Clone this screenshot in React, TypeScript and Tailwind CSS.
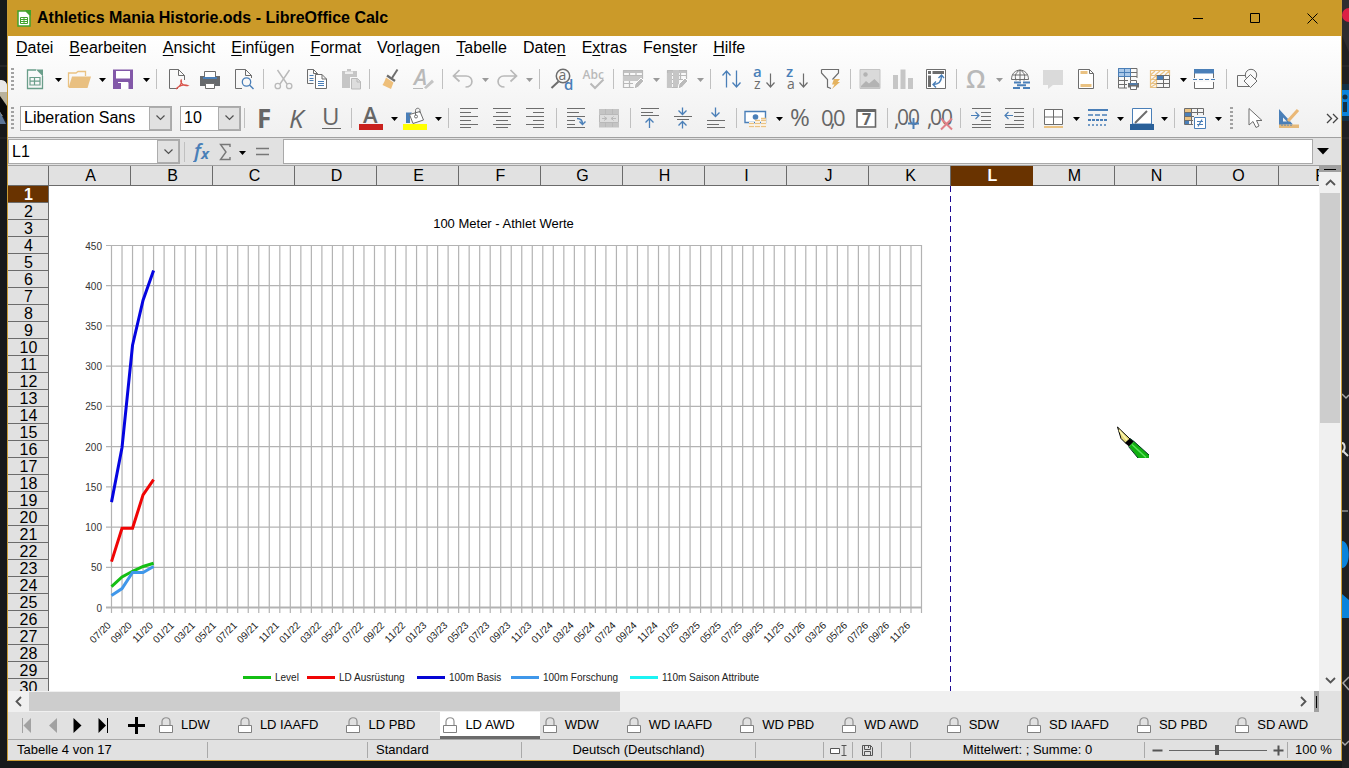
import { useState } from 'react';
import type { ReactNode } from 'react';
import clsx from 'clsx';

const GRAY = '#6d6d6d';
const LIGHT = '#b9b9b9';
const BLUE = '#4a7fb8';
const SAND = '#eac282';
const GLYPH = 'Open Sans, sans-serif';

function Icon({ children }: { children: ReactNode }) {
  return (
    <svg width="24" height="24" viewBox="0 0 24 24" fill="none" className="shrink-0 overflow-visible" aria-hidden="true">
      {children}
    </svg>
  );
}

const icons: Record<string, ReactNode> = {
  /* ---------- standard toolbar icons ---------- */
  new: (
    <>
      <path d="M13 3H4.5V21.5H19.5V9" stroke="#6a9e8a" strokeWidth="1.3" />
      <path d="M13 2.5H20V9.5Z" fill="#6a9e8a" />
      <path d="M7 10.5H17V18H7ZM7 14.2H17M11.5 10.5V18" stroke="#6a9e8a" strokeWidth="1.2" />
    </>
  ),
  open: (
    <>
      <path d="M1.5 20V6H9L11 4.5H18.5V9" stroke={SAND} strokeWidth="1.3" />
      <path d="M5 9.5H24L20.5 21H1.5Z" fill="#e9c081" />
    </>
  ),
  save: (
    <>
      <path d="M2 2.5H22V22H2Z" fill="#8258a8" />
      <path d="M5 4H19V11.5H5Z" fill="#fff" />
      <path d="M7 15.5H17V22H7Z" fill="#fff" />
      <path d="M10 16V22H7V16Z" fill="#8258a8" />
      <path d="M7 15.5H17V22" stroke="#fff" />
    </>
  ),
  pdf: (
    <>
      <path d="M13.5 2.5H4.5V21.5H13M19.5 13V8.5L13.5 2.5V8.5H19.5" stroke={GRAY} />
      <path d="M11 22C15 19.5 17.5 15.5 16.2 13C15 15 18 19.5 22.5 18.5C19 17 14 18.5 11 22" stroke="#d9534a" strokeWidth="1.3" />
    </>
  ),
  print: (
    <>
      <path d="M2 9H22V19H2Z" fill="#66696c" />
      <path d="M6.5 11.5V4.5H17.5V11.5Z" stroke={GRAY} fill="#fff" />
      <path d="M5 11H19" stroke={BLUE} strokeWidth="2" />
      <path d="M7.5 16.5H16.5V21.5H7.5Z" stroke={GRAY} fill="#fff" />
    </>
  ),
  preview: (
    <>
      <path d="M11 21.5H4.5V2.5H14.5L20.5 8.5V11M14.5 2.5V8.5H20.5" stroke={GRAY} />
      <circle cx="15.5" cy="15" r="4.2" stroke={BLUE} strokeWidth="1.3" />
      <path d="M18.5 18L22.5 22" stroke={BLUE} strokeWidth="1.5" />
    </>
  ),
  cut: (
    <>
      <path d="M6.5 3L16 17M18.5 3L9 17" stroke={LIGHT} strokeWidth="1.4" />
      <circle cx="6.8" cy="19" r="2.7" stroke={LIGHT} strokeWidth="1.3" />
      <circle cx="18.2" cy="19" r="2.7" stroke={LIGHT} strokeWidth="1.3" />
    </>
  ),
  copy: (
    <>
      <path d="M9.5 16.5H3.5V2.5H9.5L13.5 6.5V8" stroke={GRAY} />
      <path d="M9.5 2.5V6.5H13.5" stroke={GRAY} />
      <path d="M11.5 7.5H18L22.5 12V21.5H11.5ZM18 7.5V12H22.5" stroke={GRAY} fill="#fff" />
      <path d="M5.5 8.5H9.5M5.5 11.5H9.5M5.5 13.5H9.5M14 14.5H20M14 16.5H20M14 18.5H20" stroke={BLUE} />
    </>
  ),
  paste: (
    <>
      <path d="M5 4H10V2H14V4H20V10H13V21H5Z" fill="#c6c6c6" />
      <path d="M8 4.5H16V7H8Z" fill="#eee" />
      <path d="M14.5 11.5H20.5L23.5 14.5V22H14.5Z" fill="#ddd" stroke={LIGHT} />
      <path d="M20 11.5V15H23.5" stroke={LIGHT} />
    </>
  ),
  brush: (
    <>
      <path d="M20.5 2.5L15 11" stroke={GRAY} strokeWidth="2" />
      <path d="M10 8.5L18 14" stroke={GRAY} strokeWidth="2.2" />
      <path d="M9 10.5L16.5 15.5L14 22L5.5 18C7 16 8 13 9 10.5Z" fill="#eebf7a" />
    </>
  ),
  clear: (
    <>
      <text x="4" y="18" fontSize="22" fontFamily={GLYPH} fontStyle="italic" fontWeight="600" fill={LIGHT}>A</text>
      <path d="M3 21.5H13" stroke={LIGHT} />
      <path d="M14 20.5L22 12.5L24 15L16 22Z" fill="#c4c4c4" />
    </>
  ),
  undo: <path d="M9.5 3L3.5 9L9.5 14.5M3.5 9H16C24 9 24 20 15.5 20" stroke={LIGHT} strokeWidth="1.7" />,
  redo: <path d="M16.5 3L22.5 9L16.5 14.5M22.5 9H10C2 9 2 20 10.5 20" stroke={LIGHT} strokeWidth="1.7" />,
  find: (
    <>
      <circle cx="15" cy="9" r="6.7" stroke={GRAY} strokeWidth="1.5" />
      <path d="M10.5 14.5L3.5 21" stroke={GRAY} strokeWidth="2" />
      <text x="10.5" y="13" fontSize="14" fontFamily={GLYPH} fill={GRAY}>a</text>
      <text x="16" y="22.5" fontSize="15" fontFamily={GLYPH} fontWeight="600" fill={BLUE}>d</text>
    </>
  ),
  spell: (
    <>
      <text x="1.5" y="12" fontSize="12" fontFamily={GLYPH} fontWeight="600" fill={LIGHT}>Abc</text>
      <path d="M9.5 16.5L14 21L22.5 12.5" stroke={LIGHT} strokeWidth="2" />
    </>
  ),
  rows: (
    <>
      <path d="M2 3H22V6H2Z" fill="#c2c2c2" />
      <path d="M2.5 3.5H21.5V12M2.5 3.5V20.5H13M8.5 6V20.5M15 6V13M2.5 8.5H21.5M2.5 16.5H12" stroke={LIGHT} strokeWidth="1.2" />
      <path d="M2 9H21V14H2Z" fill="#c9c9c9" />
      <path d="M13 22L14 17L20 11L23 14L17 20.5Z" fill="#bbb" stroke="#fff" />
    </>
  ),
  columns: (
    <>
      <path d="M2 3H22V6H2Z" fill="#c2c2c2" />
      <path d="M2.5 3.5H21.5V12M2.5 3.5V20.5H13M15.5 6V13M2.5 8.5H21.5M2.5 12.5H19M2.5 16.5H12" stroke={LIGHT} strokeWidth="1.2" />
      <path d="M8 3H14V20H8ZM2 6H7V21H2Z" fill="#c6c6c6" />
      <path d="M13 22L14 17L20 11L23 14L17 20.5Z" fill="#bbb" stroke="#fff" />
    </>
  ),
  sort: <path d="M7.5 20.5V4.5M3.5 8.5L7.5 4L11.5 8.5M17.5 3.5V19.5M13.5 15.5L17.5 20L21.5 15.5" stroke={BLUE} strokeWidth="1.3" />,
  sortAsc: (
    <>
      <text x="1" y="10" fontSize="15" fontFamily={GLYPH} fontWeight="600" fill={BLUE}>a</text>
      <text x="2" y="22" fontSize="14" fontFamily={GLYPH} fill={GRAY}>z</text>
      <path d="M18.5 6.5V19.5M14.5 15.5L18.5 20L22.5 15.5" stroke={GRAY} strokeWidth="1.2" />
    </>
  ),
  sortDesc: (
    <>
      <text x="1" y="10" fontSize="15" fontFamily={GLYPH} fontWeight="600" fill={BLUE}>z</text>
      <text x="2" y="22" fontSize="14" fontFamily={GLYPH} fill={GRAY}>a</text>
      <path d="M18.5 6.5V19.5M14.5 15.5L18.5 20L22.5 15.5" stroke={GRAY} strokeWidth="1.2" />
    </>
  ),
  filter: (
    <>
      <path d="M3.5 2.5H20.5V6L14.5 12.5M3.5 2.5V6L9.5 12.5V20L13 21.5" stroke={GRAY} strokeWidth="1.2" />
      <path d="M16 12H22L19.5 15H22L14 22L16.5 17.5H14Z" fill="#e5b35f" />
    </>
  ),
  image: (
    <>
      <path d="M2 2.5H22V21.5H2Z" fill="#dadada" stroke="#c4c4c4" />
      <path d="M3 19L8 14L11 16.5L16.5 12L21.5 17V20.5H3Z" fill="#b3b3b3" />
      <circle cx="7.5" cy="7.5" r="2.2" fill="#b3b3b3" />
    </>
  ),
  chart: <path d="M2 8H7V22H2ZM9.5 2.5H14.5V22H9.5ZM17 11H22V22H17Z" fill="#c6c6c6" />,
  pivot: (
    <>
      <path d="M2.5 2.5H21.5V21.5H2.5Z" stroke={GRAY} fill="#fff" />
      <path d="M4 4H7V7H4ZM8.5 4H20V7H8.5ZM4 8.5H7V20H4Z" fill={GRAY} />
      <path d="M9 17.5C15 17.5 17.5 14 17.5 9M14.5 11L17.5 8L20 11M12 14.5L9 17.5L12 20.5" stroke={BLUE} strokeWidth="1.4" />
    </>
  ),
  omega: <text x="2" y="21" fontSize="25" fontFamily={GLYPH} fontWeight="600" fill={LIGHT}>Ω</text>,
  link: (
    <>
      <path d="M3.5 12.500C3.500 0 20.500 0 20.500 12.500ZM12 3V14M4.500 8H19.500M12 3C6.500 6 7 10 8 13.500M12 3C17.500 6 17 10 16 13.500" stroke={GRAY} />
      <path d="M6 15.500H13M15 15.500H22M5 21H12M15 21H22M9 18.200H18" stroke={BLUE} strokeWidth="2" />
    </>
  ),
  comment: <path d="M2 3H22V18H12L7 22V18H2Z" fill="#dadada" />,
  headerFooter: (
    <>
      <path d="M4.5 2.5H15.5L19.5 6.5V21.5H4.5Z" stroke={GRAY} fill="#fff" />
      <path d="M15.5 2.5V6.5H19.5" stroke={GRAY} />
      <path d="M6.5 4H13.5V7H6.5ZM6.5 17H17.5V20H6.5Z" fill={SAND} />
    </>
  ),
  printArea: (
    <>
      <path d="M3 2H16V9H3Z" fill="#aac8e8" />
      <path d="M3.5 1.5H22V11M3.5 1.5V21H12M3.5 5.5H22M3.5 9.5H22M3.5 13.5H13M3.5 17.5H12M9.5 1.5V21M15.5 1.5V13" stroke={GRAY} />
      <path d="M3.5 9.5V1.5H15.5V9.5ZM3.5 5.5H15.5M9.5 1.5V9.5" stroke={BLUE} />
      <path d="M15.5 16V13.5H21.5V16" stroke={GRAY} fill="#fff" />
      <path d="M13 16H24V20.5H13Z" fill={GRAY} />
      <path d="M15.5 19H21.5V22.5H15.5Z" stroke={GRAY} fill="#fff" />
      <path d="M14.5 17H22.5" stroke={BLUE} strokeWidth="1.5" />
    </>
  ),
  freeze: (
    <>
      <path d="M2.5 8.5V20.5H8.5V8.5M2.5 3.5H21.5V8.5H2.5ZM2.5 8L7 4M7 8L12 4M12 8L17 4M17 8L21 4M3 13L8 9M3 17L8 13M3 20L8 17M2.5 12.5H8.5M2.5 16.5H8.5" stroke={SAND} strokeWidth="1.2" />
      <path d="M8.5 8.5H21.5V20.5H8.5M8.5 12.5H21.5M8.5 16.5H21.5M15.5 8.5V20.5" stroke={GRAY} />
      <path d="M9 9H15V12.5H9Z" fill={BLUE} />
    </>
  ),
  split: (
    <>
      <path d="M2.5 11V3.5H21.5V11M2.5 15V21.5H21.5V15" stroke={GRAY} fill="#fff" />
      <path d="M2 2H22V6.5H2Z" fill={BLUE} />
      <path d="M1 12.5H23" stroke={BLUE} strokeDasharray="4 2" />
    </>
  ),
  shapes: (
    <>
      <path d="M2.5 8.5H14V19.5H2.5Z" stroke={GRAY} />
      <circle cx="16" cy="8" r="5.7" stroke={GRAY} fill="#fafafa" />
      <path d="M15.5 7.5L22 14L15.5 20.5L9 14Z" stroke={GRAY} fill="#fafafa" />
    </>
  ),
  /* ---------- formatting toolbar icons ---------- */
  bold: <text x="5" y="22" fontSize="26" fontFamily={GLYPH} fontWeight="700" fill="#666">F</text>,
  italic: <text x="4" y="22" fontSize="26" fontFamily={GLYPH} fontStyle="italic" fill="#666">K</text>,
  underline: (
    <>
      <text x="4" y="19" fontSize="24" fontFamily={GLYPH} fill="#666">U</text>
      <path d="M4 22.5H23" stroke="#666" />
    </>
  ),
  fontColor: (
    <>
      <text x="4" y="17" fontSize="22" fontFamily={GLYPH} fontWeight="600" fill="#666">A</text>
      <path d="M0 18H24V24H0Z" fill="#c9211e" />
    </>
  ),
  highlight: (
    <>
      <path d="M3 17V6.5H9L7 9V17Z" fill={BLUE} />
      <path d="M6.5 8.5L17 5.5L20.5 14L10 17.5Z" stroke={GRAY} fill="#fff" />
      <path d="M12.5 9V4.5C12.5 1.5 17 1.5 17 4.5V7" stroke={GRAY} />
      <circle cx="13" cy="10.5" r="1.5" stroke={GRAY} />
      <path d="M0 18H24V24H0Z" fill="#ffff00" />
    </>
  ),
  left: <path d="M3 2.5H21M3 6.5H14M3 10.5H21M3 14.5H14M3 18.5H21M3 21.5H14" stroke={GRAY} />,
  center: <path d="M3 2.5H21M6 6.5H18M3 10.5H21M6 14.5H18M3 18.5H21M6 21.5H18" stroke={GRAY} />,
  right: <path d="M3 2.5H21M10 6.5H21M3 10.5H21M10 14.5H21M3 18.5H21M10 21.5H21" stroke={GRAY} />,
  wrap: (
    <>
      <path d="M3 2.5H21M3 6.5H15M3 10.5H21M3 14.5H11M3 18.5H11M3 21.5H21" stroke={GRAY} />
      <path d="M13 12.5C17 12.5 18.5 14 18.5 18M15.5 15.5L18.5 18.5L21.5 15.5" stroke={BLUE} strokeWidth="1.4" />
    </>
  ),
  merge: (
    <>
      <path d="M2 3H22V8H2ZM2 17H22V21.5H2Z" fill="#c4c4c4" />
      <path d="M2.5 8.5H21.5V16.5H2.5ZM8.5 3V8M15.5 3V8M8.5 17V21M15.5 17V21M5 12.5H10M14 12.5H19M7 10.5L10 12.5L7 14.5M17 10.5L14 12.5L17 14.5" stroke={LIGHT} fill="#ddd" />
    </>
  ),
  top: (
    <>
      <path d="M3 2.5H21M3 6.5H15M3 9.5H21" stroke={GRAY} />
      <path d="M11.5 22V12.5M7.5 16.5L11.5 12.5L15.5 16.5" stroke={BLUE} strokeWidth="1.3" />
    </>
  ),
  middle: (
    <>
      <path d="M3 10.5H21M6 13.5H18" stroke={GRAY} />
      <path d="M11.5 1.5V8M7.5 4.5L11.5 8.5L15.5 4.5M11.5 22.5V16M7.5 19.5L11.5 15.5L15.5 19.5" stroke={BLUE} strokeWidth="1.3" />
    </>
  ),
  bottom: (
    <>
      <path d="M3 14.5H21M3 18.5H15M3 21.5H21" stroke={GRAY} />
      <path d="M11.5 1.5V10.5M7.5 6.5L11.5 10.5L15.5 6.5" stroke={BLUE} strokeWidth="1.3" />
    </>
  ),
  currency: (
    <>
      <path d="M1 5.500H21.500V16.500H1Z" stroke={BLUE} strokeWidth="1.4" fill="#fff" />
      <circle cx="11.5" cy="11" r="2.8" fill={BLUE} />
      <path d="M5 16H10V21.5H5ZM11 14H16V21.5H11ZM17 12H22V21.5H17Z" fill="#fff" />
      <path d="M5 17.5H10M5 20.5H10M11 14.5H16M11 17.5H16M11 20.5H16M17 12.5H22M17 14.5H22M17 17.5H22M17 20.5H22" stroke={SAND} strokeWidth="1.6" />
    </>
  ),
  percent: <text x="2" y="20" fontSize="24" fontFamily={GLYPH} fill="#666">%</text>,
  number: (
    <>
      <text x="0" y="20" fontSize="22" fontFamily={GLYPH} fill="#666">0</text>
      <text x="9" y="20" fontSize="22" fontFamily={GLYPH} fill="#666">,</text>
      <text x="12" y="20" fontSize="22" fontFamily={GLYPH} fill="#666">0</text>
    </>
  ),
  date: (
    <>
      <path d="M3 4H21.5V21H3Z" stroke="#666" strokeWidth="1.6" fill="#fff" />
      <path d="M3 4.5H21.5" stroke="#666" strokeWidth="3" />
      <text x="8" y="19" fontSize="16" fontFamily={GLYPH} fontWeight="700" fill="#666">7</text>
    </>
  ),
  addDecimal: (
    <>
      <text x="-1" y="20" fontSize="21" fontFamily={GLYPH} fill="#666">,</text>
      <text x="2" y="19" fontSize="21" fontFamily={GLYPH} fill="#666">0</text>
      <text x="13" y="19" fontSize="21" fontFamily={GLYPH} fill="#666">0</text>
      <path d="M18.5 12V23M13 17.5H24" stroke={BLUE} strokeWidth="2" />
    </>
  ),
  deleteDecimal: (
    <>
      <text x="-1" y="20" fontSize="21" fontFamily={GLYPH} fill="#666">,</text>
      <text x="2" y="19" fontSize="21" fontFamily={GLYPH} fill="#666">0</text>
      <text x="13" y="19" fontSize="21" fontFamily={GLYPH} fill="#666">0</text>
      <path d="M13 12.5L24 23.5M24 12.5L13 23.5" stroke="#e08088" strokeWidth="2" />
    </>
  ),
  indent: (
    <>
      <path d="M4 2.5H23M13 6.5H23M13 10.5H23M13 14.5H23M4 18.5H23M4 21.5H23" stroke={GRAY} />
      <path d="M3 9.5H11M7.5 6L11 9.5L7.5 13" stroke={BLUE} strokeWidth="1.2" />
    </>
  ),
  outdent: (
    <>
      <path d="M4 2.5H23M13 6.5H23M13 10.5H23M13 14.5H23M4 18.5H23M4 21.5H23" stroke={GRAY} />
      <path d="M4 9.5H12M7.5 6L4 9.5L7.5 13" stroke={BLUE} strokeWidth="1.2" />
    </>
  ),
  borders: (
    <>
      <path d="M3.5 3.5H21.5V18.5H3.5ZM12.5 3.5V18.5M3.5 11H21.5" stroke={GRAY} fill="#fff" />
      <path d="M3 21H22" stroke={SAND} strokeWidth="2" />
    </>
  ),
  borderStyle: (
    <>
      <path d="M3 4H23" stroke={BLUE} strokeWidth="2" />
      <path d="M3 9H23" stroke={BLUE} strokeWidth="1.5" strokeDasharray="5 2" />
      <path d="M3 14H23" stroke={BLUE} strokeWidth="2" strokeDasharray="3 1" />
      <path d="M3 19H23" stroke={BLUE} strokeWidth="1.5" strokeDasharray="2 2" />
    </>
  ),
  borderColor: (
    <>
      <path d="M3.5 2.5H22.5V18H3.5Z" stroke={BLUE} fill="#fff" />
      <path d="M6 17L18 5" stroke={GRAY} strokeWidth="2" />
      <path d="M1 18H25V24H1Z" fill="#2a6099" />
    </>
  ),
  conditional: (
    <>
      <path d="M2 3H8V7H2ZM2 11H8V15H2Z" fill={SAND} />
      <path d="M2 7H9V11H2ZM2 15H6V19H2Z" fill={BLUE} />
      <path d="M1.5 2.5H20.5V9M1.5 2.5V18.5H10M1.5 6.5H20M1.5 10.5H11M1.5 14.5H10M8.5 2.5V18M14.5 2.5V9" stroke={GRAY} />
      <path d="M11.5 11.5H22.5V22.5H11.5Z" stroke={BLUE} fill="#fff" />
      <path d="M14 15.5H20M14 18.5H20M19 13.5L15 20.5" stroke={BLUE} strokeWidth="1.2" />
    </>
  ),
  pointer: <path d="M6 2.5V19L10 15.5L13 21.5L16 20L13.5 14.5H19Z" stroke={GRAY} fill="#fff" />,
  draw: (
    <>
      <path d="M3 19V3L17 18.500ZM7 11.500V15.500H11Z" fill={BLUE} fillRule="evenodd" />
      <path d="M12 15L22 4" stroke="#eab877" strokeWidth="3.2" />
      <path d="M3 18.5H23V22H3Z" fill="#e5b97a" />
      <path d="M6 18.5V20M9 18.5V20M12 18.5V20M15 18.5V20" stroke={BLUE} />
    </>
  ),
};

function Chevron({ disabled }: { disabled?: boolean }) {
  return (
    <svg width="7" height="4" viewBox="0 0 7 4" className="mt-0.5 ml-2 shrink-0" aria-hidden="true">
      <path d="M0 0H7L3.5 4Z" fill={disabled ? '#9a9a9a' : '#000'} />
    </svg>
  );
}

function Tool({ name, label, menu, disabled }: { name: string; label: string; menu?: boolean; disabled?: boolean }) {
  return (
    <button
      type="button"
      aria-label={label}
      disabled={disabled}
      className={clsx('flex h-8 shrink-0 items-center pl-1', menu ? 'w-11' : 'w-[33px]')}
    >
      <Icon>{icons[name]}</Icon>
      {menu && <Chevron disabled={disabled} />}
    </button>
  );
}

function Sep({ className = 'w-[7px]' }: { className?: string }) {
  return (
    <div className={clsx('flex shrink-0 justify-center', className)}>
      <div className="h-5 w-px bg-[#c0c0c0]" />
    </div>
  );
}

function Grip({ className }: { className?: string }) {
  return (
    <div className={clsx('flex shrink-0', className)}>
      <div className="h-[23px] w-[3px] bg-[repeating-linear-gradient(#a2a2a2_0_2px,transparent_2px_4px)]" />
    </div>
  );
}

function DropBox() {
  return (
    <span className="pointer-events-none absolute inset-y-0 right-0 flex w-[22px] items-center justify-center border border-[#adadad] bg-[#e1e1e1]">
      <svg width="9" height="6" viewBox="0 0 9 6" fill="none" aria-hidden="true">
        <path d="M0.5 0.5L4.5 4.5L8.5 0.5" stroke="#505050" strokeWidth="1.2" />
      </svg>
    </span>
  );
}

function Combo({ label, value, className }: { label: string; value: string; className?: string }) {
  return (
    <div className={clsx('relative h-[25px] shrink-0 border border-[#a9a9a9] bg-white', className)}>
      <select aria-label={label} className="block h-full w-full appearance-none bg-transparent pl-[3px] text-base leading-none outline-none">
        <option>{value}</option>
      </select>
      <DropBox />
    </div>
  );
}

// [before, mnemonic, after]
const menus: [string, string, string][] = [
  ['', 'D', 'atei'],
  ['', 'B', 'earbeiten'],
  ['', 'A', 'nsicht'],
  ['', 'E', 'infügen'],
  ['', 'F', 'ormat'],
  ['Vo', 'r', 'lagen'],
  ['', 'T', 'abelle'],
  ['Date', 'n', ''],
  ['E', 'x', 'tras'],
  ['Fen', 's', 'ter'],
  ['', 'H', 'ilfe'],
];

function TitleBar() {
  return (
    <header className="flex h-9 shrink-0 items-center bg-[#cb9a29] pl-[9px]">
      <svg width="14" height="17" viewBox="0 0 14 17" aria-hidden="true">
        <path d="M1 1H9L13 5V16H1Z" fill="#fff" stroke="#43a22c" strokeWidth="1.5" />
        <path d="M8 0H14V6Z" fill="#43a22c" />
        <path d="M3.5 7.5H10.5V13.5H3.5ZM3.5 9.5H10.5M3.5 11.5H10.5M7 7.5V13.5" stroke="#43a22c" fill="none" />
      </svg>
      <h1 className="ml-1.5 flex-1 text-base font-bold whitespace-nowrap">Athletics Mania Historie.ods - LibreOffice Calc</h1>
      <button type="button" aria-label="Minimieren" className="flex h-9 w-[57px] items-center justify-center">
        <svg width="11" height="11" viewBox="0 0 11 11"><path d="M0 5.5H10" stroke="#000" /></svg>
      </button>
      <button type="button" aria-label="Maximieren" className="flex h-9 w-[57px] items-center justify-center">
        <svg width="11" height="11" viewBox="0 0 11 11"><path d="M0.5 0.5H9.5V9.5H0.5Z" stroke="#000" fill="none" /></svg>
      </button>
      <button type="button" aria-label="Schließen" className="flex h-9 w-[57px] items-center justify-center">
        <svg width="11" height="11" viewBox="0 0 11 11"><path d="M0.5 0.5L10.5 10.5M10.5 0.5L0.5 10.5" stroke="#000" /></svg>
      </button>
    </header>
  );
}

function StandardToolbar() {
  return (
    <div role="toolbar" aria-label="Standard" className="flex h-10 items-center pl-[3px]">
      <Grip className="w-2" />
      <Tool name="new" label="Neu" menu />
      <Tool name="open" label="Öffnen" menu />
      <Tool name="save" label="Speichern" menu />
      <Sep className="w-2.5" />
      <Tool name="pdf" label="Als PDF exportieren" />
      <Tool name="print" label="Drucken" />
      <Tool name="preview" label="Druckvorschau" />
      <Sep />
      <Tool name="cut" label="Ausschneiden" disabled />
      <Tool name="copy" label="Kopieren" />
      <Tool name="paste" label="Einfügen" disabled />
      <Sep />
      <Tool name="brush" label="Format übertragen" />
      <Tool name="clear" label="Formatierung löschen" disabled />
      <Sep />
      <Tool name="undo" label="Rückgängig" menu disabled />
      <Tool name="redo" label="Wiederherstellen" menu disabled />
      <Sep className="w-2.5" />
      <Tool name="find" label="Suchen und Ersetzen" />
      <Tool name="spell" label="Rechtschreibung" disabled />
      <Sep />
      <Tool name="rows" label="Zeile" menu disabled />
      <Tool name="columns" label="Spalte" menu disabled />
      <Sep className="w-2.5" />
      <Tool name="sort" label="Sortieren" />
      <Tool name="sortAsc" label="Aufsteigend sortieren" />
      <Tool name="sortDesc" label="Absteigend sortieren" />
      <Tool name="filter" label="AutoFilter" />
      <Sep />
      <Tool name="image" label="Bild" disabled />
      <Tool name="chart" label="Diagramm" disabled />
      <Tool name="pivot" label="Pivot-Tabelle" />
      <Sep />
      <Tool name="omega" label="Sonderzeichen" menu disabled />
      <Tool name="link" label="Hyperlink" />
      <Tool name="comment" label="Kommentar" disabled />
      <Tool name="headerFooter" label="Kopf- und Fußzeilen" />
      <Sep className="w-2" />
      <Tool name="printArea" label="Druckbereich" />
      <Tool name="freeze" label="Zeilen und Spalten fixieren" menu />
      <Tool name="split" label="Fenster teilen" />
      <Sep className="w-2.5" />
      <Tool name="shapes" label="Zeichenfunktionen" />
    </div>
  );
}

function FormatToolbar() {
  return (
    <div role="toolbar" aria-label="Formatierung" className="flex h-[38px] items-center pl-[3px]">
      <Grip className="w-[9px]" />
      <Combo label="Schriftname" value="Liberation Sans" className="w-[152px]" />
      <Combo label="Schriftgröße" value="10" className="ml-2 w-[61px]" />
      <Sep />
      <Tool name="bold" label="Fett" />
      <Tool name="italic" label="Kursiv" />
      <Tool name="underline" label="Unterstrichen" />
      <Sep className="w-2" />
      <Tool name="fontColor" label="Schriftfarbe" menu />
      <Tool name="highlight" label="Hintergrundfarbe" menu />
      <Sep className="w-2.5" />
      <Tool name="left" label="Links ausrichten" />
      <Tool name="center" label="Horizontal zentrieren" />
      <Tool name="right" label="Rechts ausrichten" />
      <Sep className="w-2" />
      <Tool name="wrap" label="Textumbruch" />
      <Tool name="merge" label="Zellen verbinden" disabled />
      <Sep className="w-2" />
      <Tool name="top" label="Oben ausrichten" />
      <Tool name="middle" label="Vertikal zentrieren" />
      <Tool name="bottom" label="Unten ausrichten" />
      <Sep />
      <Tool name="currency" label="Als Währung formatieren" menu />
      <Tool name="percent" label="Als Prozent formatieren" />
      <Tool name="number" label="Als Zahl formatieren" />
      <Tool name="date" label="Als Datum formatieren" />
      <Sep className="w-2" />
      <Tool name="addDecimal" label="Dezimalstelle hinzufügen" />
      <Tool name="deleteDecimal" label="Dezimalstelle löschen" />
      <Sep />
      <Tool name="indent" label="Einzug erhöhen" />
      <Tool name="outdent" label="Einzug verringern" />
      <Sep />
      <Tool name="borders" label="Umrandung" menu />
      <Tool name="borderStyle" label="Rahmenstil" menu />
      <Tool name="borderColor" label="Rahmenfarbe" menu />
      <Sep className="w-2.5" />
      <Tool name="conditional" label="Bedingte Formatierung" menu />
      <Grip className="w-4 pl-[7px]" />
      <Tool name="pointer" label="Auswählen" />
      <Tool name="draw" label="Zeichenfunktionen anzeigen" />
      <button type="button" aria-label="Weitere Symbole" className="ml-auto pr-0.5">
        <svg width="13" height="11" viewBox="0 0 13 11" fill="none">
          <path d="M1 1L5.5 5.5L1 10M7 1L11.5 5.5L7 10" stroke="#444" strokeWidth="1.3" />
        </svg>
      </button>
    </div>
  );
}

function FormulaBar() {
  return (
    <div className="flex h-7 shrink-0 items-center border-t border-[#a0a0a0] bg-[#e1e1e1]">
      <Combo label="Namensfeld" value="L1" className="w-[172px]" />
      <Sep className="w-2" />
      <button type="button" aria-label="Funktions-Assistent" className="flex w-7 justify-center">
        <svg width="18" height="20" viewBox="0 0 18 20">
          <text x="1" y="16" fontSize="20" fontFamily={GLYPH} fontStyle="italic" fontWeight="600" fill={BLUE}>f</text>
          <text x="8" y="17" fontSize="15" fontFamily={GLYPH} fontStyle="italic" fontWeight="700" fill={BLUE}>x</text>
        </svg>
      </button>
      <button type="button" aria-label="Funktion auswählen" className="flex w-8 items-center justify-center">
        <svg width="12" height="18" viewBox="0 0 12 18" fill="none" className="shrink-0">
          <path d="M11 4V1.5H1.5L7 9L1.5 16.5H11V14" stroke="#777" strokeWidth="1.4" />
        </svg>
        <Chevron />
      </button>
      <button type="button" aria-label="Formel" className="flex w-7 justify-center">
        <svg width="13" height="9" viewBox="0 0 13 9"><path d="M0 1.5H13M0 7.5H13" stroke="#777" strokeWidth="1.6" /></svg>
      </button>
      <input aria-label="Eingabezeile" className="ml-[7px] h-[25px] min-w-0 flex-1 border border-[#a9a9a9] bg-white px-1 text-base outline-none" />
      <button type="button" aria-label="Eingabezeile aufklappen" className="flex w-7 pl-1">
        <svg width="12" height="7" viewBox="0 0 12 7"><path d="M0 0H12L6 6.5Z" fill="#000" /></svg>
      </button>
    </div>
  );
}

/* ---------- chart ---------- */

const X0 = 111.5;
const Y0 = 607.5;
const STEP = 810 / 77;
const px = (i: number) => X0 + i * STEP;
const py = (v: number) => Y0 - (v * 362) / 450;

const series = [
  { name: 'LD Ausrüstung', color: '#f00505', data: [57, 98.5, 98.5, 140, 159] },
  { name: '100m Basis', color: '#0505e0', data: [131, 199, 326, 382, 419] },
  { name: 'Level', color: '#14bf14', data: [26, 38, 45, 51, 55] },
  { name: '100m Forschung', color: '#3f97ea', data: [15, 23.5, 43.5, 43.5, 51] },
];

const legend = [
  { name: 'Level', color: '#14bf14', x: 243 },
  { name: 'LD Ausrüstung', color: '#f00505', x: 307 },
  { name: '100m Basis', color: '#0505d4', x: 417 },
  { name: '100m Forschung', color: '#3f97ea', x: 511 },
  { name: '110m Saison Attribute', color: '#1cf3f3', x: 630 },
];

function AthleteChart() {
  const months = Array.from({ length: 78 }, (_, i) => i);
  const levels = Array.from({ length: 10 }, (_, i) => i * 50);
  return (
    <svg width="901" height="505" viewBox="49 186 901 505" className="block shrink-0" role="img" aria-label="100 Meter - Athlet Werte">
      <text x="503.5" y="228" textAnchor="middle" fontSize="13" fill="#000">100 Meter - Athlet Werte</text>
      {months.map((i) => (
        <path key={i} d={`M${px(i)} 245V613`} stroke="#b3b3b3" strokeWidth="1.2" />
      ))}
      {levels.map((v) => (
        <g key={v}>
          <path d={`M106 ${py(v)}H922`} stroke="#b3b3b3" strokeWidth={v === 0 ? 2 : 1.2} />
          <text x="102" y={py(v) + 4} textAnchor="end" fontSize="10" fill="#333">{v}</text>
        </g>
      ))}
      {months.filter((i) => i % 2 === 0).map((i) => {
        const m = 6 + i;
        const label = `${String((m % 12) + 1).padStart(2, '0')}/${20 + Math.floor(m / 12)}`;
        return (
          <text key={i} transform={`translate(${px(i)} 626) rotate(-45)`} textAnchor="end" fontSize="10" fill="#222">
            {label}
          </text>
        );
      })}
      {series.map((s) => (
        <polyline key={s.name} points={s.data.map((v, i) => `${px(i)},${py(v)}`).join(' ')} fill="none" stroke={s.color} strokeWidth="3" />
      ))}
      {legend.map((l) => (
        <g key={l.name}>
          <path d={`M${l.x} 677.5H${l.x + 28}`} stroke={l.color} strokeWidth="3" />
          <text x={l.x + 32} y="681" fontSize="10" fill="#222">{l.name}</text>
        </g>
      ))}
    </svg>
  );
}

const columns = 'ABCDEFGHIJKLMNOP'.split('');
const rows = Array.from({ length: 30 }, (_, i) => i + 1);

function Sheet() {
  return (
    <div className="relative min-w-0 flex-1 overflow-hidden bg-white">
      <table className="w-[1353px] table-fixed border-separate border-spacing-0 text-base">
        <thead>
          <tr>
            <td className="h-5 w-[41px] border-r border-b border-[#6b6b6b] bg-[#e1e1e1]" />
            {columns.map((c) => (
              <th
                key={c}
                scope="col"
                className={clsx(
                  'h-5 w-[82px] border-r border-b p-0 pl-0.5 leading-[19px]',
                  c === 'L' ? 'border-[#693300] bg-[#693300] font-bold text-white' : 'border-[#6b6b6b] bg-[#e1e1e1] font-normal',
                )}
              >
                {c}
              </th>
            ))}
          </tr>
        </thead>
        <tbody>
          {rows.map((r) => (
            <tr key={r}>
              <th
                scope="row"
                className={clsx(
                  'h-[17px] border-r border-b border-[#6b6b6b] p-0 pt-px pl-px leading-[15px]',
                  r === 1 ? 'bg-[#693300] font-bold text-white' : 'bg-[#e1e1e1] font-normal',
                )}
              >
                {r}
              </th>
              {r === 1 && (
                <td rowSpan={30} colSpan={16} className="p-0 align-top">
                  <div className="flex">
                    <AthleteChart />
                    <div className="w-px bg-[repeating-linear-gradient(#1d0a96_0_6px,transparent_6px_10px)]" />
                  </div>
                </td>
              )}
            </tr>
          ))}
        </tbody>
      </table>
      {/* fountain pen pointer */}
      <svg width="34" height="34" viewBox="0 0 34 34" className="absolute top-[260px] left-[1108px]" aria-hidden="true">
        <path d="M1.500 1L14 13L9.500 17L5 12.500Z" fill="#e6dc7c" stroke="#000" />
        <path d="M3 4L11 14" stroke="#fff6b0" strokeWidth="1.500" />
        <path d="M9 17L14 12.500L18 15.500L13 20.500Z" fill="#000" />
        <path d="M13 20.500L18 15.500L33 29V32H22Z" fill="#10b010" />
        <path d="M16 18.500L30 31.500" stroke="#5ce05c" strokeWidth="1.500" />
        <path d="M14 12.500L18 15.500L33 29M12.500 20.500L22 32" stroke="#032" fill="none" />
      </svg>
    </div>
  );
}

function VerticalScroll() {
  return (
    <div className="flex w-[22px] shrink-0 flex-col bg-[#f0f0f0]">
      <div className="flex h-1.5 items-center justify-center bg-[#a0a0a0]">
        <div className="h-px w-3 bg-black" />
      </div>
      <button type="button" aria-label="Nach oben" className="flex h-[21px] items-center justify-center">
        <svg width="11" height="7" viewBox="0 0 11 7" fill="none"><path d="M1 6L5.5 1.5L10 6" stroke="#555" strokeWidth="1.8" /></svg>
      </button>
      <div className="flex min-h-0 flex-1 flex-col px-px">
        <div className="h-[48.4%] bg-[#cdcdcd]" />
      </div>
      <button type="button" aria-label="Nach unten" className="flex h-[22px] items-center justify-center">
        <svg width="11" height="7" viewBox="0 0 11 7" fill="none"><path d="M1 1L5.5 5.5L10 1" stroke="#555" strokeWidth="1.8" /></svg>
      </button>
    </div>
  );
}

function HorizontalScroll() {
  return (
    <div className="flex h-[21px] shrink-0 bg-[#e1e1e1]">
      <button type="button" aria-label="Nach links" className="flex w-[21px] items-center justify-center bg-[#f0f0f0]">
        <svg width="7" height="11" viewBox="0 0 7 11" fill="none"><path d="M6 1L1.5 5.5L6 10" stroke="#555" strokeWidth="1.8" /></svg>
      </button>
      <div className="flex min-w-0 flex-1 bg-[#f0f0f0] py-px">
        <div className="w-[46.8%] bg-[#cdcdcd]" />
      </div>
      <button type="button" aria-label="Nach rechts" className="flex w-[22px] items-center justify-center bg-[#f0f0f0]">
        <svg width="7" height="11" viewBox="0 0 7 11" fill="none"><path d="M1 1L5.5 5.5L1 10" stroke="#555" strokeWidth="1.8" /></svg>
      </button>
      <div className="flex w-[5px] items-center justify-center bg-[#a0a0a0]">
        <div className="h-3 w-px bg-black" />
      </div>
      <div className="w-[22px]" />
    </div>
  );
}

const sheets = ['LDW', 'LD IAAFD', 'LD PBD', 'LD AWD', 'WDW', 'WD IAAFD', 'WD PBD', 'WD AWD', 'SDW', 'SD IAAFD', 'SD PBD', 'SD AWD'];

function SheetTabs() {
  const [active, setActive] = useState('LD AWD');
  return (
    <nav aria-label="Tabellen" className="flex h-[27px] shrink-0 overflow-hidden bg-[#e1e1e1]">
      <div className="flex w-[148px] shrink-0 items-center pl-1.5">
        <button type="button" aria-label="Erste Tabelle" className="flex w-[26px] justify-center">
          <svg width="12" height="15" viewBox="0 0 12 15"><path d="M1.5 0V15" stroke="#a2a2a2" /><path d="M10 0V15L2.5 7.5Z" fill="#a2a2a2" /></svg>
        </button>
        <button type="button" aria-label="Vorherige Tabelle" className="flex w-[25px] justify-center">
          <svg width="9" height="15" viewBox="0 0 9 15"><path d="M9 0V15L1 7.5Z" fill="#a2a2a2" /></svg>
        </button>
        <button type="button" aria-label="Nächste Tabelle" className="flex w-[26px] justify-center">
          <svg width="9" height="15" viewBox="0 0 9 15"><path d="M0.5 0V15L8.5 7.5Z" fill="#000" /></svg>
        </button>
        <button type="button" aria-label="Letzte Tabelle" className="flex w-[26px] justify-center">
          <svg width="12" height="15" viewBox="0 0 12 15"><path d="M10.5 0V15" stroke="#000" /><path d="M1.5 0V15L9 7.5Z" fill="#000" /></svg>
        </button>
        <button type="button" aria-label="Tabelle hinzufügen" className="flex w-10 justify-center">
          <svg width="17" height="17" viewBox="0 0 17 17"><path d="M0 8.5H17M8.5 0V17" stroke="#000" strokeWidth="3" /></svg>
        </button>
      </div>
      {sheets.map((s) => (
        <button
          key={s}
          type="button"
          aria-pressed={s === active}
          onClick={() => setActive(s)}
          className={clsx(
            'flex h-[27px] shrink-0 items-center border-b-3 pt-0.5 pr-[25px] pl-[3px] text-[13px] whitespace-nowrap',
            s === active ? 'border-[#6b6b6b] bg-white' : 'border-transparent',
          )}
        >
          <svg width="14" height="16" viewBox="0 0 14 16" className="mr-2 shrink-0" aria-hidden="true">
            <path d="M3 8V4.5C3 -0.5 11 -0.5 11 4.5V8" stroke="#909090" fill="none" strokeWidth="1.2" />
            <path d="M0.5 8.5H13.5V15.5H0.5Z" fill="#fff" stroke="#808080" />
          </svg>
          {s}
        </button>
      ))}
    </nav>
  );
}

function StatusBar() {
  return (
    <footer className="flex h-[21px] shrink-0 items-center divide-x divide-[#a9a9a9] border-t border-[#a9a9a9] bg-[#e1e1e1] text-[13px] whitespace-nowrap [&>div]:flex [&>div]:h-4 [&>div]:shrink-0 [&>div]:items-center">
      <div className="w-[200px] pl-[9px]">Tabelle 4 von 17</div>
      <div className="w-40" />
      <div className="w-[154px] pl-2">Standard</div>
      <div className="flex-1 justify-center">Deutsch (Deutschland)</div>
      <div className="w-[68px]" />
      <div className="w-[29px] justify-center">
        <svg width="17" height="11" viewBox="0 0 17 11" fill="none"><path d="M0.5 3.5H9.5V8.5H0.5Z" fill="#fff" stroke="#555" /><path d="M11.5 0.5H16.5M11.5 10.5H16.5M14 0.5V10.5" stroke="#555" /></svg>
      </div>
      <div className="w-[29px] justify-center">
        <svg width="11" height="11" viewBox="0 0 11 11" fill="none"><path d="M0.5 0.5H8.5L10.5 2.5V10.5H0.5ZM2.5 0.5V4.5H8.5V0.5M2.5 10.5V6.5H8.5V10.5M6.5 1V3" stroke="#555" /></svg>
      </div>
      <div className="w-[29px]" />
      <div className="flex-1 justify-center">Mittelwert: ; Summe: 0</div>
      <div className="w-[143px] justify-center gap-1.5 pl-1">
        <button type="button" aria-label="Verkleinern">
          <svg width="11" height="11" viewBox="0 0 11 11"><path d="M0.5 5.5H10.5" stroke="#555" strokeWidth="2" /></svg>
        </button>
        <input
          type="range"
          aria-label="Maßstab"
          min="0"
          max="100"
          defaultValue="49"
          className="w-[98px] appearance-none bg-transparent [&::-webkit-slider-runnable-track]:h-px [&::-webkit-slider-runnable-track]:bg-[#666] [&::-webkit-slider-thumb]:-mt-[5px] [&::-webkit-slider-thumb]:h-2.5 [&::-webkit-slider-thumb]:w-1 [&::-webkit-slider-thumb]:appearance-none [&::-webkit-slider-thumb]:bg-[#555]"
        />
        <button type="button" aria-label="Vergrößern">
          <svg width="11" height="11" viewBox="0 0 11 11"><path d="M0.5 5.5H10.5M5.5 0.5V10.5" stroke="#555" strokeWidth="2" /></svg>
        </button>
      </div>
      <div className="w-[53px] pl-[7px]">100 %</div>
    </footer>
  );
}

export default function App() {
  return (
    <div className="flex h-screen overflow-hidden bg-[#17191a] font-['Liberation_Sans',Arial,sans-serif] text-black">
      {/* desktop visible left of the window */}
      <svg width="7" height="768" viewBox="0 0 7 768" className="shrink-0" aria-hidden="true">
        <path d="M0 66H7" stroke="#333" />
        <path d="M0 80C4 80 7 82 7 86V116H0Z" fill="#b9b29c" />
        <path d="M0 80C4 80 7 82 7 86V92H0Z" fill="#e8e8e8" />
        <path d="M0 96L7 106V122L0 112Z" fill="#0b0b0b" />
        <path d="M0 112L6 124H0Z" fill="#5c7596" />
        <path d="M0 138H7" stroke="#2c2c2c" />
      </svg>
      <div className="flex min-w-0 flex-1 flex-col pb-[7px]">
        <div className="flex min-h-0 flex-1 flex-col border-r border-b border-l border-[#c99c36] bg-white">
          <TitleBar />
          <div className="shrink-0 bg-linear-to-b from-white to-[#f0f0f0]">
            <nav aria-label="Menü" className="flex h-[23px] items-center gap-4 pl-2 text-base">
              {menus.map(([before, key, after]) => (
                <button key={before + key + after} type="button">
                  {before}
                  <span className="underline underline-offset-2">{key}</span>
                  {after}
                </button>
              ))}
            </nav>
            <StandardToolbar />
            <FormatToolbar />
          </div>
          <FormulaBar />
          <main className="flex min-h-0 flex-1 border-t border-[#a0a0a0]">
            <Sheet />
            <VerticalScroll />
          </main>
          <HorizontalScroll />
          <SheetTabs />
          <StatusBar />
        </div>
      </div>
      {/* desktop visible right of the window */}
      <svg width="7" height="768" viewBox="0 0 7 768" fill="none" className="shrink-0 bg-[#202122]" aria-hidden="true">
        <path d="M0 0H7V52L0 36Z" fill="#2d2d2f" />
        <circle cx="7" cy="15" r="7" fill="#dc2045" />
        <path d="M0 66H7M0 138H7" stroke="#333" />
        <path d="M0 84H7V121H0Z" fill="#123247" />
        <path d="M0 90H7V116H0Z" fill="#0a84dc" />
        <circle cx="3" cy="97" r="2.5" fill="#123247" />
        <path d="M1 102H5V112H1Z" fill="#123247" />
        <path d="M0 394L4 398L7 395M7 677L1 683L7 690M0 742L3 745L7 741" stroke="#aaa" strokeWidth="1.5" />
        <path d="M0 443C3 443 4 450 0 452M1 451L6 456" stroke="#ddd" strokeWidth="2" />
        <path d="M0 541C9 541 9 568 0 568ZM0 594L7 600V618H0Z" fill="#0a84dc" />
        <path d="M0 511H6" stroke="#ccc" />
      </svg>
    </div>
  );
}
